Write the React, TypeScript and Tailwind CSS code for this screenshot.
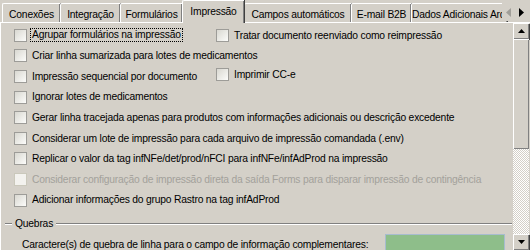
const tabs = [
  { label: 'Conexões', w: 'w-[58px]' },
  { label: 'Integração', w: 'w-[60px]' },
  { label: 'Formulários', w: 'w-[62px]' },
  { label: 'Impressão', w: 'w-[62px]', active: true },
  { label: 'Campos automáticos', w: 'w-[107px]' },
  { label: 'E-mail B2B', w: 'w-[60px]' },
  { label: 'Dados Adicionais Arquivo', w: 'w-[96px]' }
];

const Check = ({ disabled }: { disabled?: boolean }) => (
  <span
    className={
      disabled
        ? 'w-[13px] h-[13px] shrink-0 border border-[#cac8bb] bg-[#f3f2ee]'
        : 'w-[13px] h-[13px] shrink-0 border border-[#9d9c98] bg-gradient-to-br from-[#d9d8d1] to-[#fcfcfa]'
    }
  />
);

interface IOption {
  label: string;
  disabled?: boolean;
  focused?: boolean;
}

const Option = ({ label, disabled, focused }: IOption) => (
  <div className="flex items-center gap-[3px] whitespace-nowrap">
    <Check disabled={disabled} />
    <span
      className={
        (focused ? 'border border-dotted border-black px-px leading-[12px] ' : 'px-[2px] ') +
        (disabled ? 'text-[#a3a19b]' : 'text-black')
      }
    >
      {label}
    </span>
  </div>
);

const rows: { left: IOption; right?: IOption }[] = [
  {
    left: { label: 'Agrupar formulários na impressão', focused: true },
    right: { label: 'Tratar documento reenviado como reimpressão' }
  },
  { left: { label: 'Criar linha sumarizada para lotes de medicamentos' } },
  {
    left: { label: 'Impressão sequencial por documento' },
    right: { label: 'Imprimir CC-e' }
  },
  { left: { label: 'Ignorar lotes de medicamentos' } },
  {
    left: {
      label:
        'Gerar linha tracejada apenas para produtos com informações adicionais ou descrição excedente'
    }
  },
  {
    left: {
      label:
        'Considerar um lote de impressão para cada arquivo de impressão comandada (.env)'
    }
  },
  {
    left: {
      label:
        'Replicar o valor da tag infNFe/det/prod/nFCI para infNFe/infAdProd na impressão'
    }
  },
  {
    left: {
      label:
        'Considerar configuração de impressão direta da saída Forms para disparar impressão de contingência',
      disabled: true
    }
  },
  { left: { label: 'Adicionar informações do grupo Rastro na tag infAdProd' } }
];

const ScrollButton = ({ down }: { down?: boolean }) => (
  <div className="h-[16px] shrink-0 bg-[#d4d0c8] shadow-[inset_1px_1px_0_#fff,inset_-1px_-1px_0_#808080,1px_1px_0_#404040] flex items-center justify-center">
    <svg width="7" height="4" viewBox="0 0 7 4">
      <polygon points={down ? '0,0 7,0 3.5,4' : '0,4 7,4 3.5,0'} fill="#000" />
    </svg>
  </div>
);

export default function App() {
  return (
    <div className="w-[530px] h-[250px] overflow-hidden bg-[#d4d0c8] text-[10.3px] tracking-[-0.2px] font-['Liberation_Sans',Arial,sans-serif] select-none">
      <div className="relative h-[22px] flex items-end pl-[2px]">
        {tabs.map((t) =>
          t.active ? (
            <div
              key={t.label}
              className={`${t.w} relative z-10 h-[23px] -mb-px pt-[3px] text-center bg-[#d4d0c8] border-t border-l border-white rounded-tl-[2px] shadow-[inset_-1px_0_0_#808080,1px_0_0_#404040]`}
            >
              {t.label}
            </div>
          ) : (
            <div
              key={t.label}
              className={`${t.w} h-[19px] pt-[3px] text-center whitespace-nowrap overflow-hidden border-t border-l border-white rounded-tl-[2px] shadow-[inset_-1px_0_0_#808080,1px_0_0_#404040]`}
            >
              {t.label}
            </div>
          )
        )}
        <div className="absolute right-0 top-[3px] w-[28px] h-[18px] bg-[#d4d0c8] flex items-center justify-around pr-[2px]">
          <svg width="5" height="9" viewBox="0 0 5 9">
            <polygon points="5,0 5,9 0,4.5" fill="#a09e98" />
          </svg>
          <svg width="5" height="9" viewBox="0 0 5 9">
            <polygon points="0,0 0,9 5,4.5" fill="#000" />
          </svg>
        </div>
      </div>

      <div className="flex h-[228px] border-t border-l border-white">
        <div className="flex-1 min-w-0 pt-[2px] pl-[13px]">
          {rows.map((r, i) =>
            r.right ? (
              <div key={i} className="h-[20.6px] flex items-center">
                <div className="w-[202px] shrink-0">
                  <Option {...r.left} />
                </div>
                <div className={i === 2 ? '-mt-[4px]' : ''}>
                  <Option {...r.right} />
                </div>
              </div>
            ) : (
              <div key={i} className="h-[20.6px] flex items-center">
                <Option {...r.left} />
              </div>
            )
          )}
          <div className="-ml-[9px] mt-[6px] mr-[1px] flex items-center gap-[2px]">
            <span className="w-[7px] h-[2px] border-t border-t-[#808080] border-b border-b-white" />
            <span className="px-px">Quebras</span>
            <span className="flex-1 h-[2px] border-t border-t-[#808080] border-b border-b-white" />
          </div>
          <div className="mt-[2px] flex items-start">
            <span className="pl-[8px] pt-[3px] w-[371px] shrink-0 whitespace-nowrap">
              Caractere(s) de quebra de linha para o campo de informação complementares:
            </span>
            <span className="w-[120px] h-[30px] shrink-0 bg-[#8ebe8a] border border-[#a7bccf]" />
          </div>
        </div>
        <div className="w-[16px] shrink-0 mr-px flex flex-col">
          <ScrollButton />
          <div className="h-[110px] shrink-0 bg-[#d4d0c8] shadow-[inset_1px_1px_0_#fff,inset_-1px_-1px_0_#808080]" />
          <div className="flex-1 bg-[repeating-conic-gradient(#ffffff_0_25%,#d4d0c8_0_50%)] bg-[length:2px_2px]" />
          <ScrollButton down />
        </div>
      </div>
    </div>
  );
}
